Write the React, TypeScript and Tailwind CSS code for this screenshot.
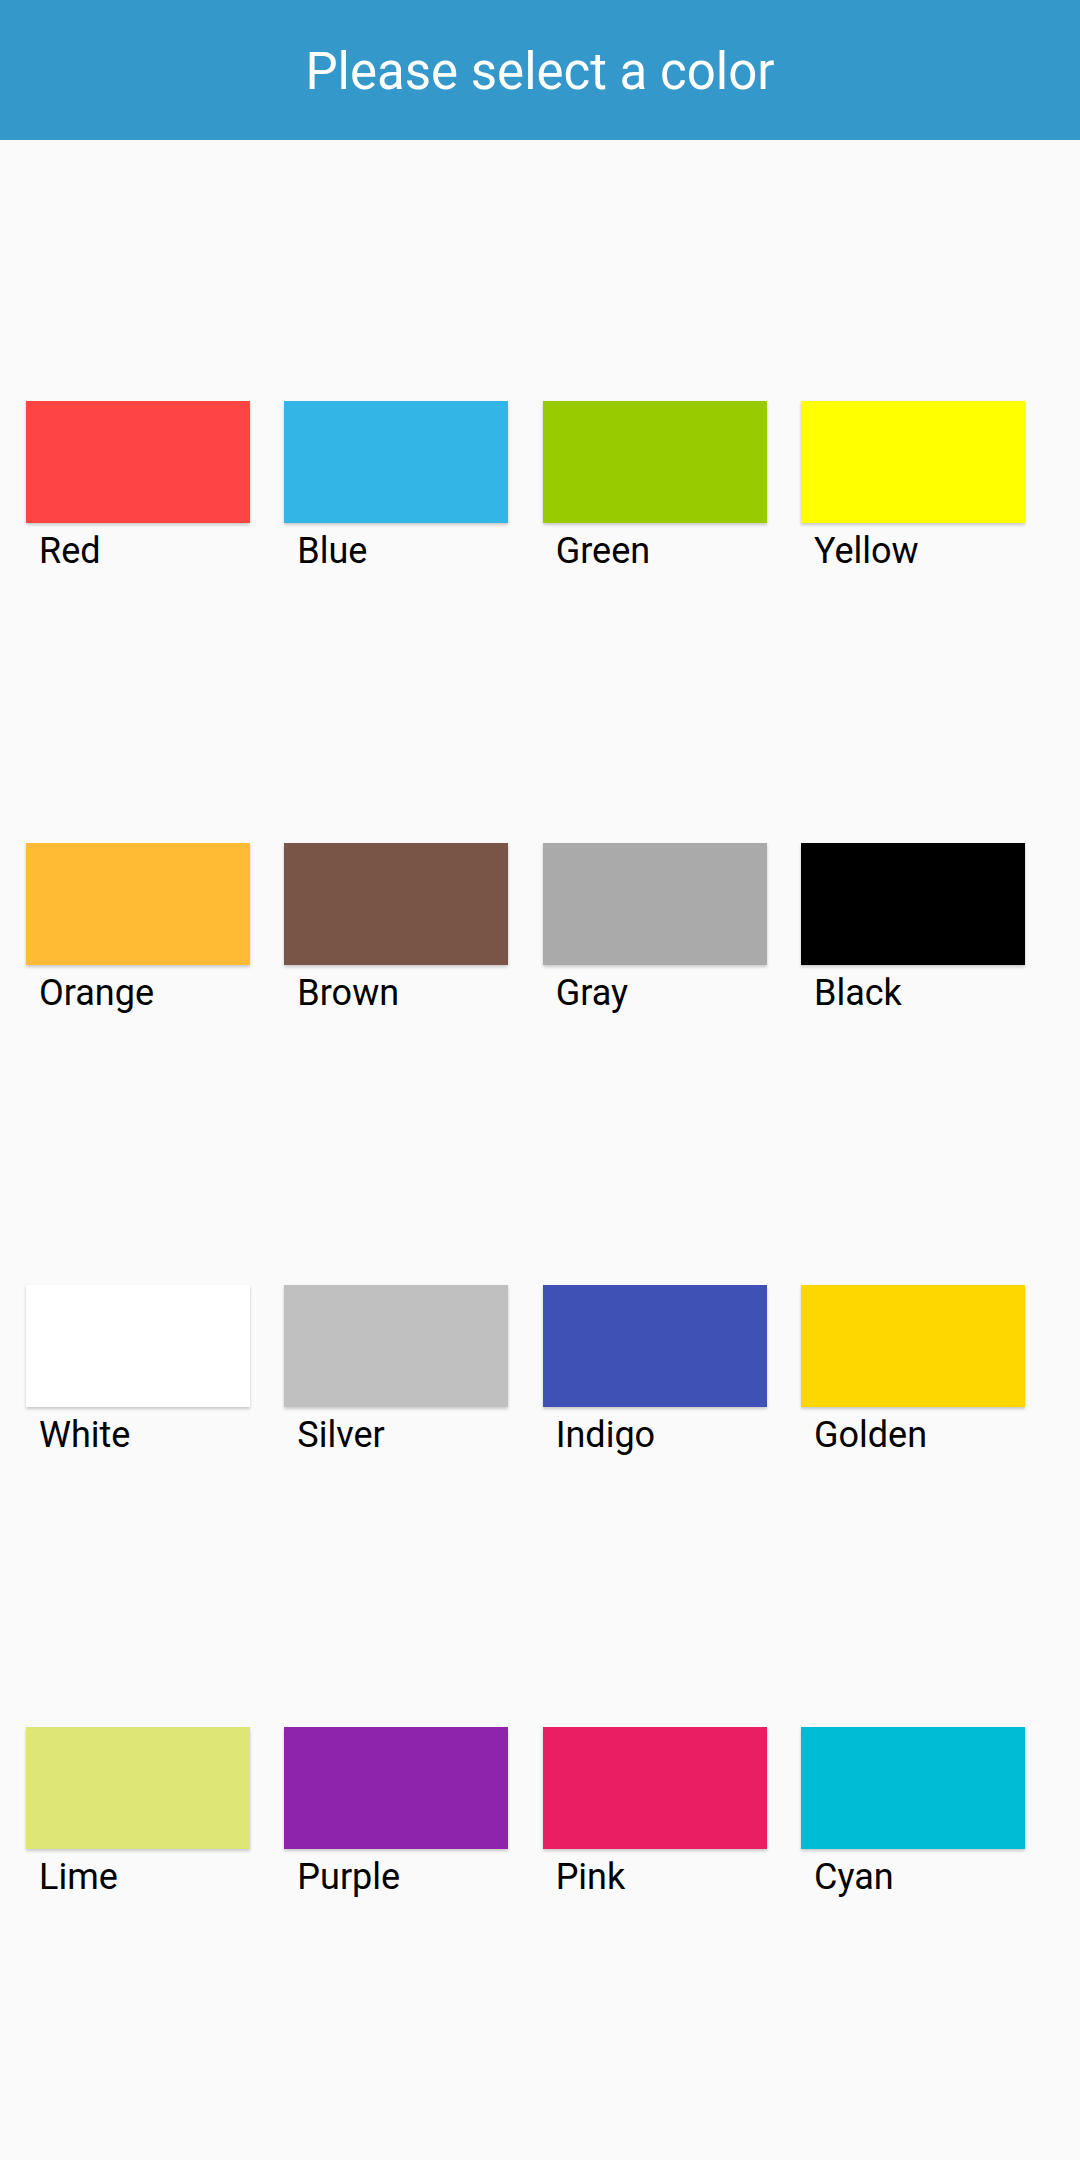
import React from 'react';

const colors = [
  { name: 'Red', hex: '#ff4444' },
  { name: 'Blue', hex: '#33b5e5' },
  { name: 'Green', hex: '#99cc00' },
  { name: 'Yellow', hex: '#ffff00' },
  { name: 'Orange', hex: '#ffbb33' },
  { name: 'Brown', hex: '#795548' },
  { name: 'Gray', hex: '#aaaaaa' },
  { name: 'Black', hex: '#000000' },
  { name: 'White', hex: '#ffffff' },
  { name: 'Silver', hex: '#c0c0c0' },
  { name: 'Indigo', hex: '#3f51b5' },
  { name: 'Golden', hex: '#ffd700' },
  { name: 'Lime', hex: '#dce775' },
  { name: 'Purple', hex: '#8e24aa' },
  { name: 'Pink', hex: '#e91e63' },
  { name: 'Cyan', hex: '#00bcd4' },
];

const App = () => {
  return (
    <div className="w-[1080px] h-[2160px] flex flex-col bg-[#fafafa] font-['Roboto',sans-serif]">
      <header className="h-[140px] shrink-0 flex items-center justify-center bg-[#3598cb]">
        <h1 className="text-[51px] font-normal text-white leading-normal pt-[5px]">Please select a color</h1>
      </header>

      <main className="flex-1 flex items-center">
        <div className="grid grid-cols-[repeat(4,224px)] auto-rows-[442px] gap-x-[34.33px] pl-[26px]">
          {colors.map((color) => (
            <div key={color.name} className="flex flex-col justify-center pt-[5px]">
              <div
                className="h-[122px] w-[224px] shadow-[0_2px_3px_rgba(0,0,0,0.2)]"
                style={{ backgroundColor: color.hex }}
              />
              <span className="pl-[13px] pt-[1px] text-[36px] leading-normal text-black">{color.name}</span>
            </div>
          ))}
        </div>
      </main>
    </div>
  );
};

export default App;
